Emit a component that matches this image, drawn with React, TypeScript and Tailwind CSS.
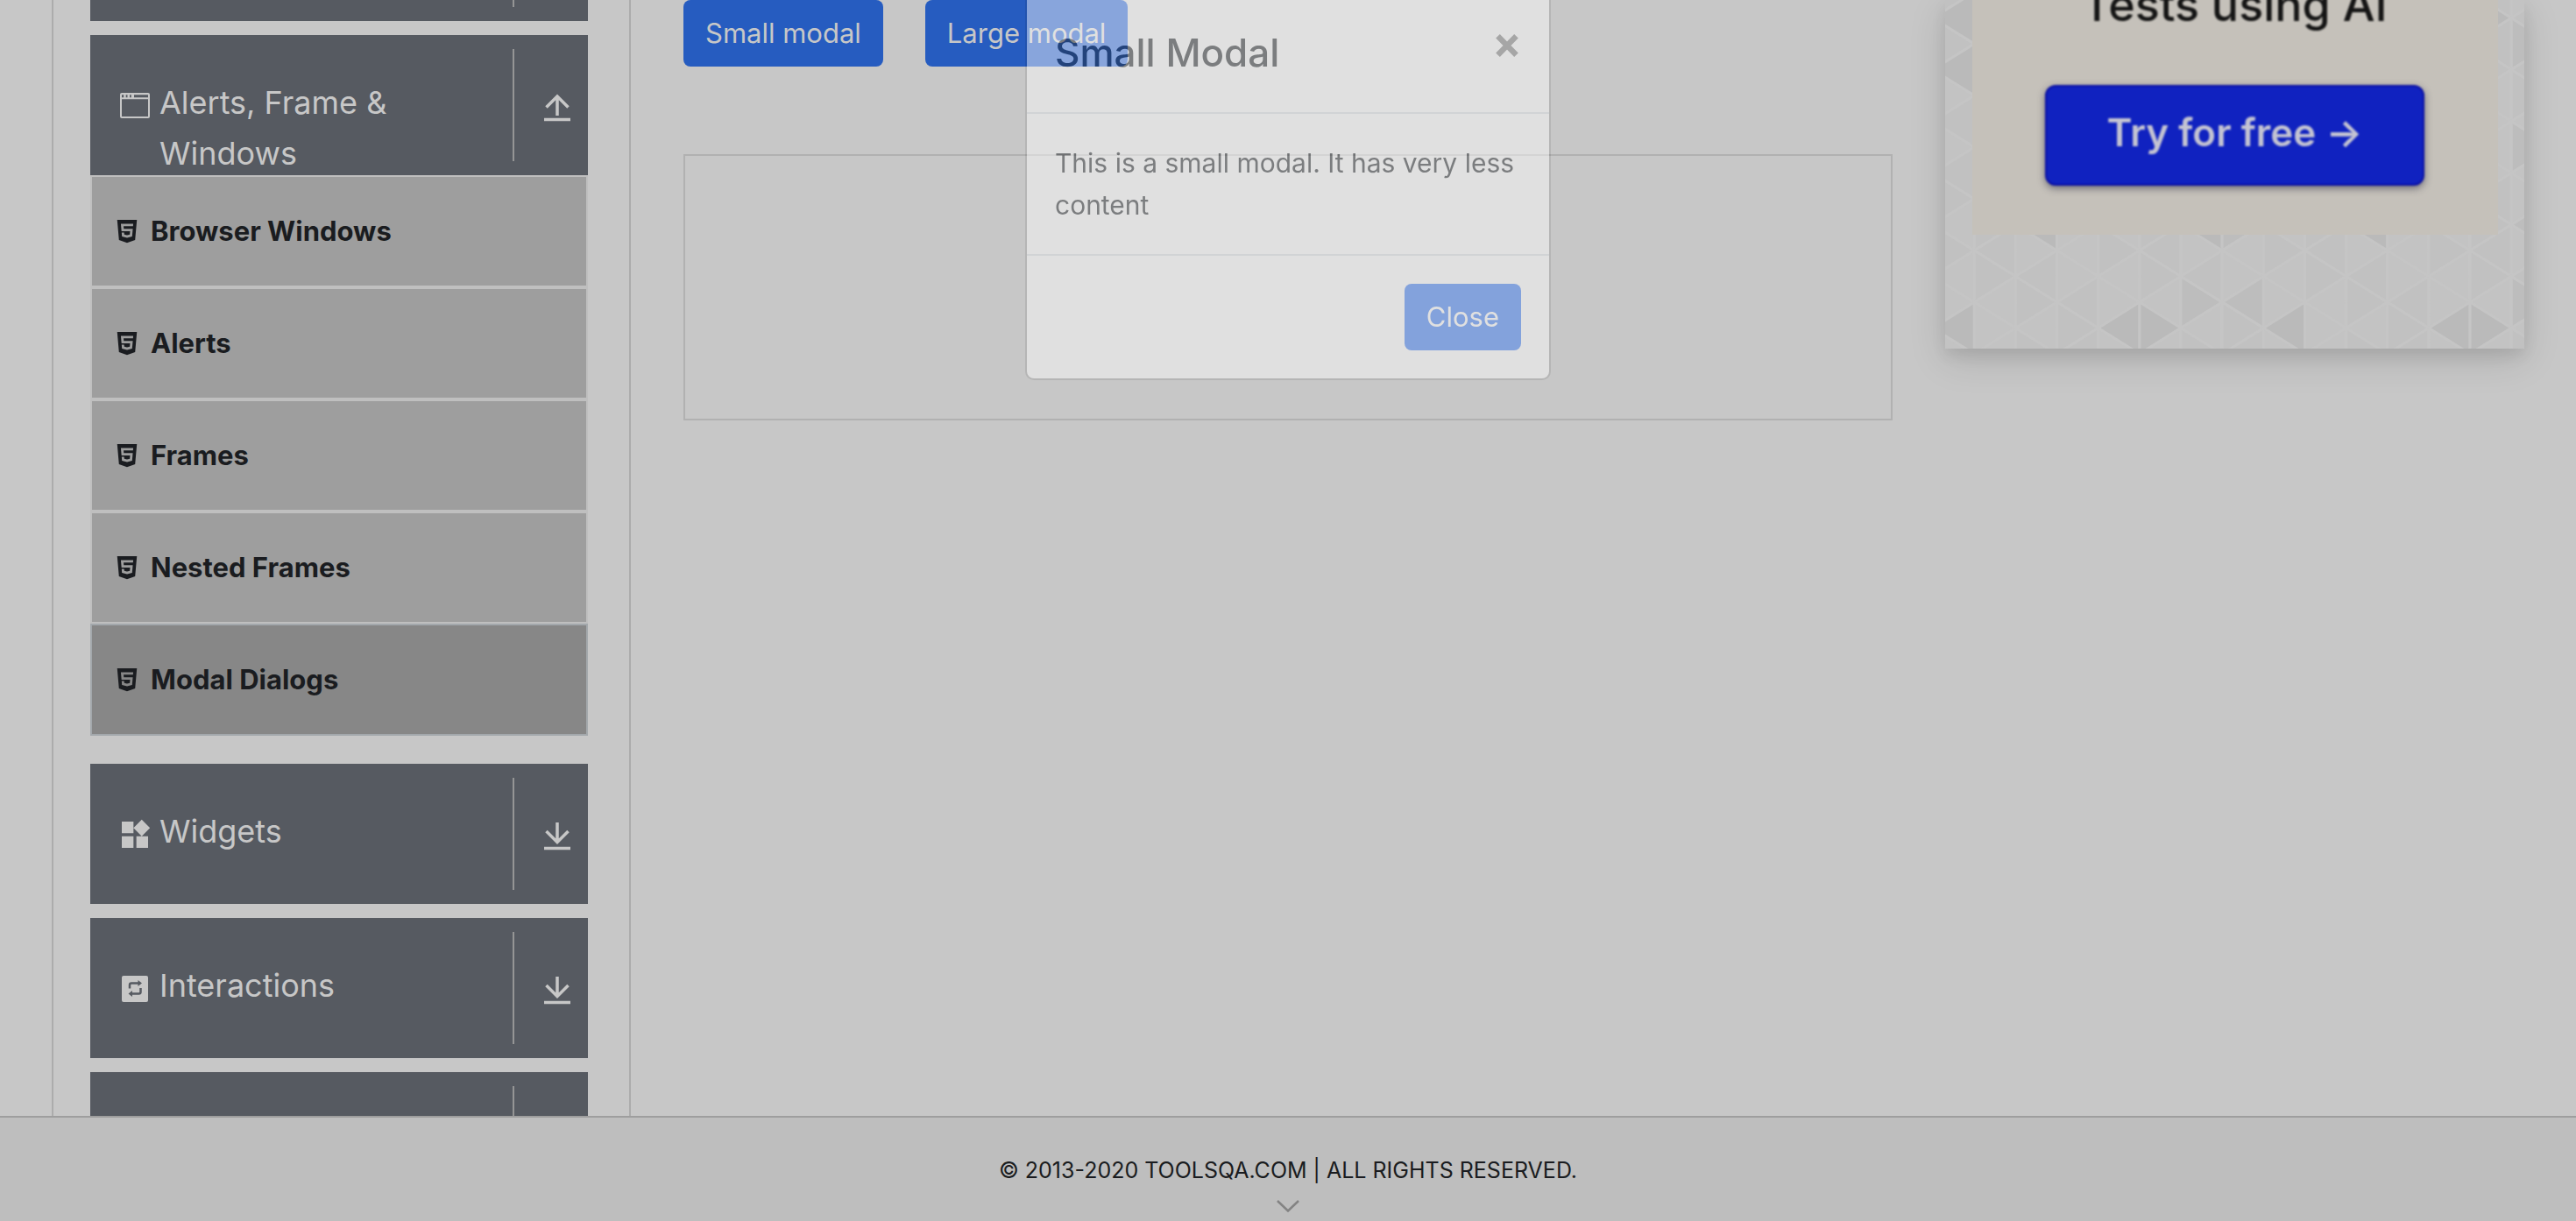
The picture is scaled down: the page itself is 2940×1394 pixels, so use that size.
import type { ReactNode } from "react";
import { FaHtml5 } from "react-icons/fa";

const COL = 47.15;
const SIDE = 59;

/* Triangles of the card backdrop, keyed by "strip:side:row". */
const DARK = new Set([
  "-1:R:0", "3:R:0", "4:L:0", "7:R:0", "11:R:0", "12:L:0",
  "1:R:-2", "5:R:-2", "9:R:-2", "-1:R:-5", "-1:R:-6", "12:L:-6",
]);
const MID = new Set(["5:L:-1", "6:R:-1", "13:R:-2", "13:L:-1", "6:L:-2", "13:L:-6", "13:L:-4"]);

function lineY(line: number, row: number) {
  return (Math.abs(line) % 2 === 0 ? 345 : 315.5) + row * SIDE;
}

function TriangleBackdrop() {
  const shapes: ReactNode[] = [];
  for (let c = -1; c <= 13; c++) {
    const xl = 33.3 + c * COL;
    const xr = xl + COL;
    for (let r = -7; r <= 1; r++) {
      for (const side of ["L", "R"]) {
        const even = Math.abs(side === "L" ? c : c + 1) % 2 === 0;
        const key = `${c}:${side}:${r}`;
        const y = lineY(side === "L" ? c : c + 1, even ? r : r + 1);
        const bx = side === "L" ? xl : xr;
        const ax = side === "L" ? xr : xl;
        const shade = (c * 5 + r * 3 + (side === "L" ? 1 : 0) + 70) % 4;
        const fill = DARK.has(key) ? "#bababa" : MID.has(key) ? "#bdbdbd" : shade < 2 ? "#c1c1c1" : "#c3c3c3";
        shapes.push(
          <polygon
            key={key}
            points={`${bx},${y} ${bx},${y + SIDE} ${ax},${y + SIDE / 2}`}
            fill={fill}
            stroke="#c5c5c5"
            strokeWidth="3"
          />,
        );
      }
    }
  }
  return (
    <svg className="absolute inset-0 h-full w-full" viewBox="0 0 661 398" preserveAspectRatio="xMinYMax slice" aria-hidden="true">
      {shapes}
    </svg>
  );
}

function WindowIcon() {
  return (
    <svg className="size-10" viewBox="0 0 40 40" fill="currentColor" aria-hidden="true">
      <path
        fillRule="evenodd"
        d="M5 5h30a2 2 0 0 1 2 2v25a2 2 0 0 1-2 2H5a2 2 0 0 1-2-2V7a2 2 0 0 1 2-2Zm0 7.200v19.800h30V12.200ZM5 7.200v3h2.200v-3Zm4.700 0v3h1.800v-3Zm4.300 0v3h1.800v-3Zm5 0v3h16v-3Z"
      />
    </svg>
  );
}

function WidgetsIcon() {
  return (
    <svg className="size-10" viewBox="0 0 24 24" fill="currentColor" aria-hidden="true">
      <path d="M13 13v8h8v-8h-8zM3 21h8v-8H3v8zM3 3v8h8V3H3zm13.660-1.310L11 7.340 16.660 13l5.660-5.660-5.660-5.650z" />
    </svg>
  );
}

function InteractionsIcon() {
  return (
    <svg className="size-10" viewBox="0 0 40 40" aria-hidden="true">
      <rect x="5" y="5" width="30" height="30" rx="2" fill="currentColor" />
      <g fill="none" stroke="#565a61" strokeWidth="2.500">
        <path d="M14 19.500v-4a2 2 0 0 1 2-2h8" />
        <path d="M26.500 19v4.500a2 2 0 0 1-2 2H17" />
      </g>
      <path d="M23.500 10v7l4.500-3.500zM17 22v7l-4.500-3.500z" fill="#565a61" />
    </svg>
  );
}

function ToggleArrow({ open }: { open?: boolean }) {
  return (
    <svg className="h-8 w-[30px]" viewBox="0 0 30 32" fill="none" stroke="currentColor" strokeWidth="3.500" aria-hidden="true">
      {open ? <path d="M15 25V2M2.500 15.500 15 3l12.500 12.500" /> : <path d="M15 0v23M2.500 10 15 22.500 27.500 10" />}
      <path d="M0 29.500h30" />
    </svg>
  );
}

function GroupHeader({ icon, label, open }: { icon?: ReactNode; label?: string; open?: boolean }) {
  return (
    <button type="button" aria-expanded={!!open} aria-label={label ?? "Book Store Application"} className="flex h-40 w-full shrink-0 items-stretch overflow-hidden bg-[#565a61] text-left text-[#c7c7c7]">
      <span className="flex min-w-0 flex-1 items-start gap-2 pl-[31px]">
        <span className="mt-[61px] shrink-0">{icon}</span>
        <span className="mt-12 w-[320px] text-[36px] leading-[58px]">{label}</span>
      </span>
      <span className="my-4 w-[2px] bg-[#959595]" />
      <span className="w-21 pt-[67px] pl-[34px]">{label && <ToggleArrow open={open} />}</span>
    </button>
  );
}

const ITEMS = ["Browser Windows", "Alerts", "Frames", "Nested Frames", "Modal Dialogs"];

function Sidebar() {
  return (
    <nav className="flex w-[661px] shrink-0 flex-col gap-4 border-x-2 border-[#acacac] pr-[47px] pl-[42px]">
      <div className="flex h-6 shrink-0 justify-end bg-[#565a61]">
        <span className="mr-21 h-2 w-[2px] bg-[#959595]" />
      </div>
      <div className="mb-4 shrink-0">
        <GroupHeader icon={<WindowIcon />} label="Alerts, Frame & Windows" open />
        <ul>
          {ITEMS.map((item) => (
            <li key={item}>
              <a
                href="#"
                aria-current={item === "Modal Dialogs" ? "page" : undefined}
                className="flex h-32 items-center gap-3 border-2 border-[#bfbfbf] bg-[#9e9e9e] pl-[25px] text-[31px] font-bold text-[#1a1c20] aria-[current=page]:border-[#a3a8ac] aria-[current=page]:bg-[#878787]"
              >
                <FaHtml5 className="size-[30px]" />
                {item}
              </a>
            </li>
          ))}
        </ul>
      </div>
      <GroupHeader icon={<WidgetsIcon />} label="Widgets" />
      <GroupHeader icon={<InteractionsIcon />} label="Interactions" />
      <GroupHeader />
    </nav>
  );
}

function Content() {
  return (
    <section className="flex min-w-0 flex-1 flex-col">
      <div className="flex gap-12">
        {["Small modal", "Large modal"].map((label) => (
          <button key={label} type="button" className="h-19 rounded-lg bg-[#265cc0] px-[25px] text-[31px] text-[#c7c7c7]">
            {label}
          </button>
        ))}
      </div>
      <div className="mt-25 h-76 border-2 border-[#b1b1b1]" />
    </section>
  );
}

function Ad() {
  return (
    <aside className="relative flex h-[398px] w-[661px] shrink-0 items-start justify-center bg-[#c3c3c3] shadow-[0_8px_16px_rgba(0,0,0,0.08),0_12px_40px_rgba(0,0,0,0.13)]">
      <TriangleBackdrop />
      <div className="relative flex h-[268px] w-[600px] flex-col items-center justify-end overflow-hidden bg-[#c5c1ba] pb-14">
        <p className="mb-[59px] shrink-0 text-[52px] leading-16 font-medium text-[#141414] blur-[1px]">Tests using AI</p>
        <a
          href="#"
          className="flex h-[115px] w-[433px] shrink-0 items-center justify-center rounded-xl border-2 border-[#0a10a4] bg-[#1022c0] pb-2 text-[44px] font-semibold text-[#c4c4d2] shadow-[0_3px_8px_rgba(50,50,70,0.6)] blur-[1px]"
        >
          Try for free →
        </a>
      </div>
    </aside>
  );
}

function Modal() {
  return (
    <div className="absolute inset-x-0 top-0 flex justify-center">
      <div role="dialog" aria-labelledby="modal-title" className="w-[600px] rounded-b-[10px] border-2 border-t-0 border-black/20 bg-white bg-clip-padding text-[#212529] opacity-45">
        <div className="flex items-start justify-between border-b-2 border-[#dee2e6] px-8 pt-6 pb-8">
          <h2 id="modal-title" className="text-[44px] leading-18 font-medium">Small Modal</h2>
          <button type="button" aria-label="Close dialog" className="pt-[15px] text-black/50">
            <svg className="h-[26px] w-[29px]" viewBox="0 0 29 26" fill="none" stroke="currentColor" strokeWidth="6.500" aria-hidden="true">
              <path d="M2.500 2.300 23.500 23.700M23.500 2.300 2.500 23.700" />
            </svg>
          </button>
        </div>
        <p className="p-8 text-[30px] leading-12">This is a small modal. It has very less content</p>
        <div className="flex justify-end border-t-2 border-[#dee2e6] p-8">
          <button type="button" className="h-19 rounded-lg bg-[#3276f6] px-[25px] text-[31px] text-white">Close</button>
        </div>
      </div>
    </div>
  );
}

export default function App() {
  return (
    <div className="relative flex h-screen flex-col overflow-hidden bg-[#c7c7c7] font-[Inter,sans-serif]">
      <main className="mx-[59px] flex min-h-0 flex-1 gap-15 overflow-x-visible overflow-y-clip">
        <Sidebar />
        <Content />
        <Ad />
      </main>
      <footer className="flex shrink-0 flex-col items-center border-t-2 border-[#9e9e9e] bg-[#bebebe] pt-10 pb-2.5">
        <p className="text-[25px] leading-10 text-[#1a1c20]">© 2013-2020 TOOLSQA.COM | ALL RIGHTS RESERVED.</p>
        <svg className="mt-3.5 h-3.5 w-[26px]" viewBox="0 0 26 14" fill="none" stroke="#838383" strokeWidth="2.500" aria-hidden="true">
          <path d="M1 1 13 12.500 25 1" />
        </svg>
      </footer>
      <Modal />
    </div>
  );
}
